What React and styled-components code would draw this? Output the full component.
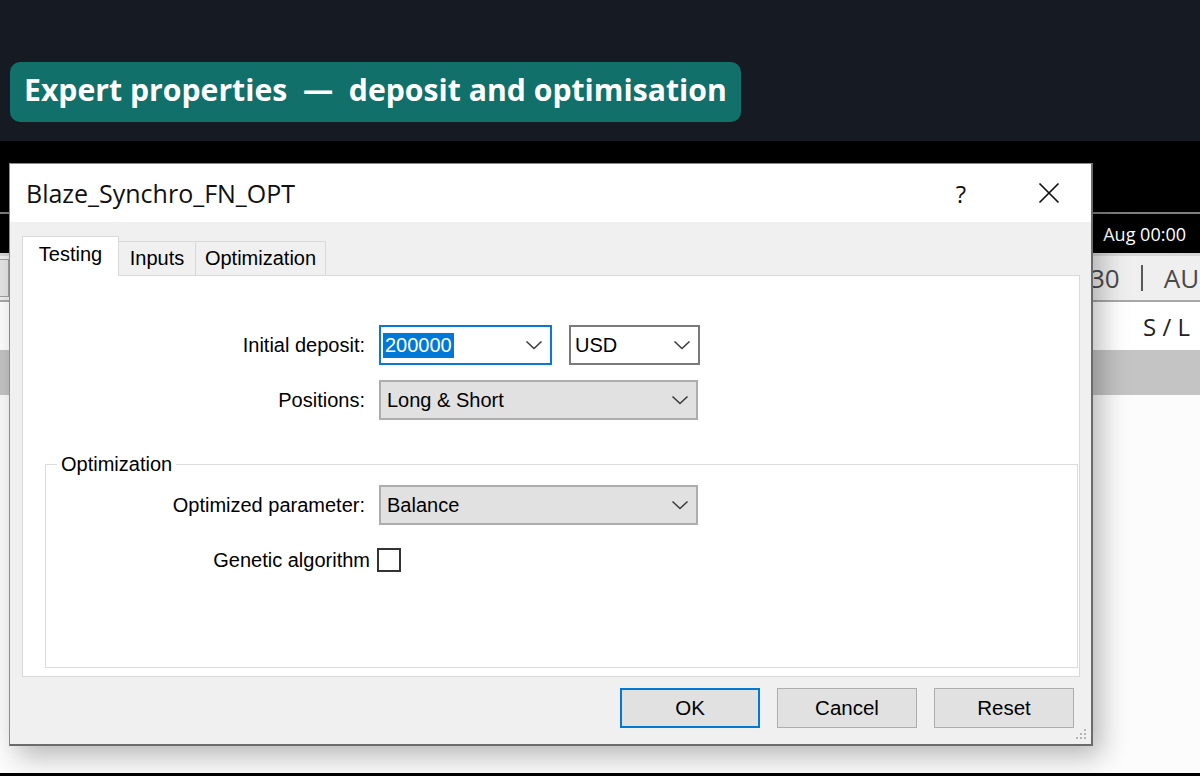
import React from 'react';
import styled, { createGlobalStyle } from 'styled-components';

const Global = createGlobalStyle`
  html, body { margin: 0; padding: 0; background: #151a23; }
  body {
    width: 1200px; height: 776px; overflow: hidden;
    font-family: "Liberation Sans", Arial, sans-serif;
  }
  * { box-sizing: border-box; }
`;

const Page = styled.div`
  width: 1200px;
  height: 776px;
  display: flex;
  flex-direction: column;
`;

const Header = styled.header`
  height: 141px;
  flex: none;
  background: #151a23;
  padding: 62px 0 0 10px;
`;

const Banner = styled.h1`
  display: inline-flex;
  align-items: center;
  height: 60px;
  margin: 0;
  padding: 0 14px 5px 14px;
  background: #12706b;
  border-radius: 10px;
  color: #fff;
  font-family: "Open Sans", "Noto Sans", sans-serif;
  font-weight: 700;
  font-size: 30.2px;
  white-space: pre;
`;

const Stage = styled.main`
  position: relative;
  flex: 1;
  background: #000;
  display: flex;
  flex-direction: column;
  overflow: hidden;
`;

const Band = styled.div`
  flex: ${p => (p.$fill ? '1' : 'none')};
  height: ${p => (p.$h ? `${p.$h}px` : 'auto')};
  background: ${p => p.$bg};
  display: flex;
  align-items: center;
  overflow: hidden;
  white-space: nowrap;
`;

const BandText = styled.span`
  flex: none;
  margin-left: ${p => p.$ml || 0}px;
  margin-right: ${p => p.$mr || 0}px;
  font-family: "Open Sans", "Liberation Sans", sans-serif;
  font-size: ${p => p.$size}px;
  color: ${p => p.$color};
`;

const Spacer = styled.span`
  flex: 1;
`;

const SideCell = styled.span`
  flex: none;
  width: 9px;
  align-self: stretch;
  margin: 3px 0;
  background: #e6e6e6;
  border: 1px solid #a0a0a0;
  border-left: none;
`;

const SymbolGroup = styled.span`
  flex: none;
  display: flex;
  align-items: center;
  gap: 21px;
  margin-left: 1081px;
  font-family: "Open Sans", "Liberation Sans", sans-serif;
  font-size: 26px;
  color: #4a4a4a;
`;

const Separator = styled.span`
  width: 2px;
  height: 26px;
  background: #5a5a5a;
`;

/* ---------- Dialog ---------- */

const Dialog = styled.section`
  position: absolute;
  top: 22px;
  left: 9px;
  width: 1084px;
  height: 583px;
  background: #f0f0f0;
  border: 1px solid #8c8c8c;
  border-right: 2px solid #6b6b6b;
  border-bottom: 2px solid #6b6b6b;
  box-shadow: 8px 10px 26px rgba(0, 0, 0, 0.28);
  display: flex;
  flex-direction: column;
`;

const TitleBar = styled.div`
  height: 58px;
  flex: none;
  background: #fff;
  display: flex;
  align-items: center;
  padding-left: 16px;
`;

const Title = styled.h2`
  flex: 1;
  margin: 0;
  font-family: "Open Sans", "Noto Sans", sans-serif;
  font-weight: 400;
  font-size: 25px;
  color: #111;
`;

const CaptionButton = styled.button`
  width: 88px;
  height: 100%;
  display: flex;
  align-items: center;
  justify-content: center;
  border: none;
  background: transparent;
  padding: 0 0 0 4px;
  font-family: "Open Sans", "Noto Sans", sans-serif;
  font-size: 24px;
  color: #111;
`;

const Body = styled.div`
  flex: 1;
  display: flex;
  flex-direction: column;
  padding: 14px 11px 0 12px;
`;

const TabStrip = styled.div`
  height: 39px;
  flex: none;
  display: flex;
  align-items: flex-end;
  position: relative;
  z-index: 1;
`;

const Tab = styled.div`
  width: ${p => p.$w}px;
  height: ${p => (p.$active ? 40 : 34)}px;
  margin-bottom: ${p => (p.$active ? -1 : 0)}px;
  margin-left: ${p => (p.$first ? 0 : -1)}px;
  display: flex;
  align-items: center;
  justify-content: center;
  padding-bottom: ${p => (p.$active ? 5 : 0)}px;
  background: ${p => (p.$active ? '#fff' : '#f0f0f0')};
  border: 1px solid #d9d9d9;
  border-bottom: none;
  font-size: 20px;
  color: #000;
`;

const Panel = styled.div`
  height: 402px;
  flex: none;
  background: #fff;
  border: 1px solid #d9d9d9;
  padding: 49px 0 8px 0;
  display: flex;
  flex-direction: column;
`;

const FormGrid = styled.div`
  display: grid;
  grid-template-columns: ${p => p.$label}px auto;
  column-gap: 14px;
  row-gap: ${p => p.$gap}px;
  align-items: center;
  margin-top: ${p => p.$mt || 0}px;
`;

const Label = styled.label`
  justify-self: end;
  font-size: 20px;
  color: #000;
  white-space: nowrap;
`;

const Controls = styled.div`
  display: flex;
  gap: 17px;
`;

const comboStyles = {
  focus: 'background:#fff; border:2px solid #0a78d7;',
  plain: 'background:#fff; border:2px solid #7a7a7a;',
  button: 'background:#e1e1e1; border:2px solid #adadad;',
};

const Combo = styled.div`
  width: ${p => p.$w}px;
  height: 40px;
  display: flex;
  align-items: center;
  justify-content: space-between;
  padding: 0 7px 0 ${p => p.$pl}px;
  ${p => comboStyles[p.$variant]}
  font-size: 20px;
  color: #000;
`;

const Selected = styled.span`
  background: #0078d7;
  color: #fff;
  padding: 0 2px;
  line-height: 25px;
`;

const Group = styled.fieldset`
  flex: 1;
  min-width: 0;
  margin: 33px 1px 0 22px;
  padding: 0;
  border: 1px solid #dcdcdc;
`;

const Legend = styled.legend`
  margin-left: 11px;
  padding: 0 4px;
  font-size: 20px;
  line-height: 23px;
  color: #000;
`;

const CheckRow = styled.div`
  grid-column: 1 / -1;
  display: grid;
  grid-template-columns: 324px 24px;
  column-gap: 7px;
  align-items: center;
`;

const Checkbox = styled.span`
  width: 24px;
  height: 24px;
  background: #fff;
  border: 2px solid #333;
`;

const Footer = styled.div`
  display: flex;
  justify-content: flex-end;
  gap: 17px;
  padding: 11px 6px 0 0;
`;

const Button = styled.button`
  width: 140px;
  height: 40px;
  background: #e1e1e1;
  border: ${p => (p.$default ? '2px solid #0078d7' : '1px solid #adadad')};
  font-family: "Liberation Sans", Arial, sans-serif;
  font-size: 20.5px;
  color: #000;
  padding: 0;
`;

const Grip = styled.svg`
  position: absolute;
  right: 3px;
  bottom: 3px;
`;

const Chevron = () => (
  <svg width="18" height="10" viewBox="0 0 18 10">
    <path d="M1.5 1.5 L9 8.5 L16.5 1.5" fill="none" stroke="#3c3c3c" strokeWidth="1.6" />
  </svg>
);

const CloseIcon = () => (
  <svg width="22" height="22" viewBox="0 0 22 22">
    <path d="M1.5 1.5 L20.5 20.5 M20.5 1.5 L1.5 20.5" stroke="#111" strokeWidth="1.7" />
  </svg>
);

export default function App() {
  return (
    <Page>
      <Global />
      <Header>
        <Banner>Expert properties  —  deposit and optimisation</Banner>
      </Header>
      <Stage>
        <Band $h={71} $bg="#000" />
        <Band $h={2} $bg="#7f7f7f" />
        <Band $h={39} $bg="#000">
          <Spacer />
          <BandText $mr={14} $size={18} $color="#fff">Aug 00:00</BandText>
        </Band>
        <Band $h={3} $bg="#d6d6d6" />
        <Band $h={44} $bg="#efefef">
          <SideCell />
          <SymbolGroup>
            <span>30</span>
            <Separator />
            <span>AU</span>
          </SymbolGroup>
        </Band>
        <Band $h={2} $bg="#a8a8a8" />
        <Band $h={48} $bg="#fff">
          <BandText $ml={1143} $size={24} $color="#222">S / L</BandText>
        </Band>
        <Band $h={45} $bg="#c4c4c4" />
        <Band $fill $bg="#fcfcfc" />
        <Band $h={3} $bg="#000" />

        <Dialog>
          <TitleBar>
            <Title>Blaze_Synchro_FN_OPT</Title>
            <CaptionButton>?</CaptionButton>
            <CaptionButton><CloseIcon /></CaptionButton>
          </TitleBar>
          <Body>
            <TabStrip>
              <Tab $active $first $w={97}>Testing</Tab>
              <Tab $w={78}>Inputs</Tab>
              <Tab $w={131}>Optimization</Tab>
            </TabStrip>
            <Panel>
              <FormGrid $label={342} $gap={15}>
                <Label>Initial deposit:</Label>
                <Controls>
                  <Combo $variant="focus" $w={173} $pl={2}>
                    <Selected>200000</Selected>
                    <Chevron />
                  </Combo>
                  <Combo $variant="plain" $w={131} $pl={4}>
                    <span>USD</span>
                    <Chevron />
                  </Combo>
                </Controls>
                <Label>Positions:</Label>
                <Controls>
                  <Combo $variant="button" $w={319} $pl={6}>
                    <span>Long &amp; Short</span>
                    <Chevron />
                  </Combo>
                </Controls>
              </FormGrid>
              <Group>
                <Legend>Optimization</Legend>
                <FormGrid $label={319} $gap={23} $mt={9}>
                  <Label>Optimized parameter:</Label>
                  <Controls>
                    <Combo $variant="button" $w={319} $pl={6}>
                      <span>Balance</span>
                      <Chevron />
                    </Combo>
                  </Controls>
                  <CheckRow>
                    <Label>Genetic algorithm</Label>
                    <Checkbox />
                  </CheckRow>
                </FormGrid>
              </Group>
            </Panel>
            <Footer>
              <Button $default>OK</Button>
              <Button>Cancel</Button>
              <Button>Reset</Button>
            </Footer>
          </Body>
          <Grip width="14" height="14" viewBox="0 0 14 14">
            <g fill="#b5b5b5">
              <rect x="10" y="2" width="2" height="2" />
              <rect x="6" y="6" width="2" height="2" />
              <rect x="10" y="6" width="2" height="2" />
              <rect x="2" y="10" width="2" height="2" />
              <rect x="6" y="10" width="2" height="2" />
              <rect x="10" y="10" width="2" height="2" />
            </g>
          </Grip>
        </Dialog>
      </Stage>
    </Page>
  );
}
